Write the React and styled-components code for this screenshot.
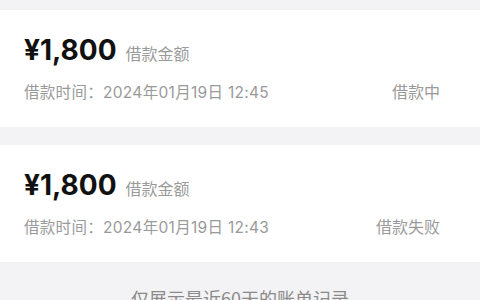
import React from 'react'
import styled, { createGlobalStyle } from 'styled-components'

const GlobalStyle = createGlobalStyle`
  html, body {
    margin: 0;
    padding: 0;
    background: #f3f3f5;
  }
  body {
    font-family: "Inter", "Noto Sans CJK SC", sans-serif;
  }
`;

const records = [
  { amount: '¥1,800', time: '2024年01月19日 12:45', status: '借款中' },
  { amount: '¥1,800', time: '2024年01月19日 12:43', status: '借款失败' },
];

const App = () => {
  return (
    <Page>
      <GlobalStyle />
      <List>
        {records.map((r, i) => (
          <Card key={i}>
            <AmountRow>
              <Amount>{r.amount}</Amount>
              <AmountLabel>借款金额</AmountLabel>
            </AmountRow>
            <InfoRow>
              <Time>借款时间：{r.time}</Time>
              <Status>{r.status}</Status>
            </InfoRow>
          </Card>
        ))}
      </List>
      <Footer>仅展示最近60天的账单记录</Footer>
    </Page>
  )
}

const Page = styled.div`
  width: 480px;
  height: 300px;
  overflow: hidden;
  padding-top: 10px;
  box-sizing: border-box;
`;

const List = styled.div`
  display: flex;
  flex-direction: column;
  gap: 18px;
`;

const Card = styled.div`
  background: #fff;
  height: 117px;
  box-sizing: border-box;
  padding: 26px 40px 0 24px;
  display: flex;
  flex-direction: column;
  gap: 15px;
`;

const AmountRow = styled.div`
  display: flex;
  align-items: baseline;
  gap: 9px;
`;

const Amount = styled.span`
  font-size: 28px;
  line-height: 28px;
  font-weight: 700;
  color: #111;
`;

const AmountLabel = styled.span`
  font-size: 16px;
  color: #9a9a9a;
  font-family: "Noto Sans CJK SC", sans-serif;
`;

const InfoRow = styled.div`
  display: flex;
  justify-content: space-between;
  align-items: baseline;
  font-size: 15.5px;
  line-height: 22px;
  color: #9a9a9a;
`;

const Time = styled.span`
  letter-spacing: 0.3px;
`;

const Status = styled.span`
  font-family: "Noto Sans CJK SC", sans-serif;
  font-size: 16px;
`;

const Footer = styled.div`
  margin-top: 24px;
  text-align: center;
  font-size: 18px;
  line-height: 24px;
  color: #8a8a8a;
  font-family: "Noto Sans CJK SC", sans-serif;
`;

export default App
